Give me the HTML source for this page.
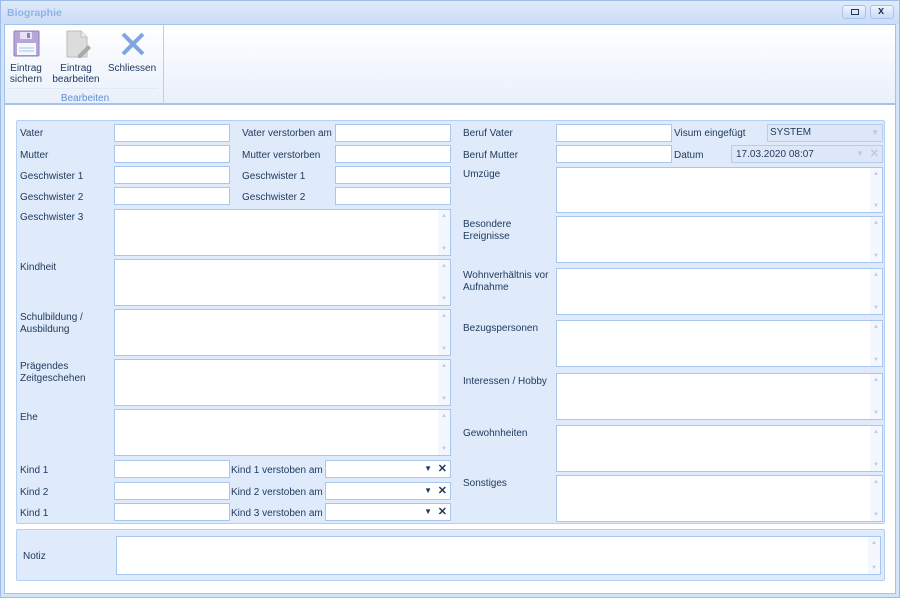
<!DOCTYPE html>
<html><head><meta charset="utf-8"><style>
*{box-sizing:border-box;margin:0;padding:0}
body{width:900px;height:598px;background:#fff;font-family:"Liberation Sans",sans-serif;font-size:10px;color:#1e395b;position:relative;overflow:hidden}
.a{position:absolute}
.win{left:0;top:0;width:900px;height:598px;border:1px solid #9dbde8;background:#d3e3f8}
.title{left:1px;top:1px;width:898px;height:23px;background:linear-gradient(#dfeafb,#cbdcf6);}
.title span{position:absolute;left:6px;top:6px;font-weight:bold;color:#8fb2e6;font-size:10.5px}
.btn{top:5px;width:24px;height:14px;border:1px solid #a8c4ec;border-radius:3px;background:linear-gradient(#eef4fd,#c9dbf5)}
.ribbon{left:4px;top:24px;width:892px;height:80px;border:1px solid #a5c2ea;background:linear-gradient(#ffffff,#e9f0fb)}
.grp{left:4px;top:24px;width:160px;height:80px;border-right:1px solid #b8cff0}
.rt{font-size:10px;color:#1e395b;text-align:center;line-height:11px}
.body{left:4px;top:104px;width:892px;height:490px;background:#fff;border:1px solid #a5c2ea}
.pan{background:#dfeafb;border:1px solid #b6cff4;border-radius:2px}
.l{position:absolute;font-size:10px;color:#1e395b;line-height:12px;margin-top:1px}
.i .l{margin-top:0}
.i{position:absolute;background:#fff;border:1px solid #a9c6f0;height:18px}
.m{position:absolute;background:#fff;border:1px solid #a9c6f0}
.m:after{content:"";position:absolute;right:0;top:0;width:12px;height:100%;background:#f4f8fe}
.m i{position:absolute;right:3px;font-style:normal;font-size:6px;color:#b9cbe6;z-index:1}
.dd{position:absolute;right:18px;top:3px;font-size:8px;color:#1e395b}
.dx{position:absolute;right:3px;top:1px;font-size:11px;font-weight:bold;color:#1e395b}
</style></head><body>
<div class="a win"></div>
<div class="a title"><span>Biographie</span></div>
<div class="a btn" style="left:842px"><div class="a" style="left:8px;top:3px;width:8px;height:6px;border:1.5px solid #1e395b"></div></div>
<div class="a btn" style="left:870px"><div class="a" style="left:7px;top:-1px;font-size:11px;font-weight:bold;color:#1e395b">x</div></div>
<div class="a ribbon"></div>
<div class="a grp"></div>
<div class="a" style="left:8px;top:88px;width:150px;height:1px;background:#e0e9f6"></div>
<svg class="a" style="left:12px;top:30px" width="30" height="28" viewBox="0 0 30 28"><rect x="2" y="1" width="25" height="25" rx="1" fill="#b7a6d6" stroke="#8f7fb8"/><rect x="8" y="2" width="12" height="7" fill="#e8e2f4"/><rect x="15" y="3" width="3" height="5" fill="#8f7fb8"/><rect x="5" y="13" width="19" height="12" fill="#f4f8ff"/><line x1="7" y1="18" x2="22" y2="18" stroke="#aac4ee"/><line x1="7" y1="21" x2="22" y2="21" stroke="#aac4ee"/></svg>
<svg class="a" style="left:64px;top:30px" width="28" height="28" viewBox="0 0 28 28"><path d="M3 1h14l6 6v20H3z" fill="#dcdcdc" stroke="#bdbdbd"/><path d="M17 1v6h6" fill="#eee" stroke="#bdbdbd"/><path d="M14 25l10-10 3 3-10 10h-3z" fill="#aaa"/></svg>
<svg class="a" style="left:120px;top:31px" width="26" height="26" viewBox="0 0 26 26"><path d="M3 3L23 23M23 3L3 23" stroke="#7fa6e0" stroke-width="4"/></svg>
<div class="a rt" style="left:6px;top:63px;width:40px">Eintrag<br>sichern</div>
<div class="a rt" style="left:50px;top:63px;width:52px">Eintrag<br>bearbeiten</div>
<div class="a rt" style="left:106px;top:63px;width:52px">Schliessen</div>
<div class="a rt" style="left:40px;top:93px;width:90px;color:#5e8fd6">Bearbeiten</div>
<div class="a body"></div>
<div class="a pan" style="left:16px;top:120px;width:869px;height:404px"></div>
<div class="a pan" style="left:16px;top:529px;width:869px;height:52px"></div>

<div class="l" style="left:20px;top:127px">Vater</div><div class="i" style="left:114px;top:124px;width:116px"></div>
<div class="l" style="left:20px;top:149px">Mutter</div><div class="i" style="left:114px;top:145px;width:116px"></div>
<div class="l" style="left:20px;top:170px">Geschwister 1</div><div class="i" style="left:114px;top:166px;width:116px"></div>
<div class="l" style="left:20px;top:191px">Geschwister 2</div><div class="i" style="left:114px;top:187px;width:116px"></div>
<div class="l" style="left:242px;top:127px">Vater verstorben am</div><div class="i" style="left:335px;top:124px;width:116px"></div>
<div class="l" style="left:242px;top:149px">Mutter verstorben</div><div class="i" style="left:335px;top:145px;width:116px"></div>
<div class="l" style="left:242px;top:170px">Geschwister 1</div><div class="i" style="left:335px;top:166px;width:116px"></div>
<div class="l" style="left:242px;top:191px">Geschwister 2</div><div class="i" style="left:335px;top:187px;width:116px"></div>

<div class="l" style="left:20px;top:211px">Geschwister 3</div><div class="m" style="left:114px;top:209px;width:337px;height:47px"><i style="top:3px">▲</i><i style="bottom:3px">▼</i></div>
<div class="l" style="left:20px;top:261px">Kindheit</div><div class="m" style="left:114px;top:259px;width:337px;height:47px"><i style="top:3px">▲</i><i style="bottom:3px">▼</i></div>
<div class="l" style="left:20px;top:311px">Schulbildung /<br>Ausbildung</div><div class="m" style="left:114px;top:309px;width:337px;height:47px"><i style="top:3px">▲</i><i style="bottom:3px">▼</i></div>
<div class="l" style="left:20px;top:360px">Prägendes<br>Zeitgeschehen</div><div class="m" style="left:114px;top:359px;width:337px;height:47px"><i style="top:3px">▲</i><i style="bottom:3px">▼</i></div>
<div class="l" style="left:20px;top:411px">Ehe</div><div class="m" style="left:114px;top:409px;width:337px;height:47px"><i style="top:3px">▲</i><i style="bottom:3px">▼</i></div>

<div class="l" style="left:20px;top:464px">Kind 1</div><div class="i" style="left:114px;top:460px;width:116px"></div>
<div class="l" style="left:20px;top:486px">Kind 2</div><div class="i" style="left:114px;top:482px;width:116px"></div>
<div class="l" style="left:20px;top:507px">Kind 1</div><div class="i" style="left:114px;top:503px;width:116px"></div>
<div class="l" style="left:231px;top:464px">Kind 1 verstoben am</div><div class="i" style="left:325px;top:460px;width:126px"><span class="dd">▼</span><span class="dx">✕</span></div>
<div class="l" style="left:231px;top:486px">Kind 2 verstoben am</div><div class="i" style="left:325px;top:482px;width:126px"><span class="dd">▼</span><span class="dx">✕</span></div>
<div class="l" style="left:231px;top:507px">Kind 3 verstoben am</div><div class="i" style="left:325px;top:503px;width:126px"><span class="dd">▼</span><span class="dx">✕</span></div>

<div class="l" style="left:463px;top:127px">Beruf Vater</div><div class="i" style="left:556px;top:124px;width:116px"></div>
<div class="l" style="left:463px;top:149px">Beruf Mutter</div><div class="i" style="left:556px;top:145px;width:116px"></div>
<div class="l" style="left:674px;top:127px">Visum eingefügt</div><div class="i" style="left:767px;top:124px;width:116px;background:#dde7f8;border-color:#b6cdf0"><span class="l" style="left:2px;top:2px">SYSTEM</span><span class="dd" style="right:3px;color:#b9cbe6">▼</span></div>
<div class="l" style="left:674px;top:149px">Datum</div><div class="i" style="left:731px;top:145px;width:152px;background:#dde7f8;border-color:#b6cdf0"><span class="l" style="left:4px;top:3px">17.03.2020 08:07</span><span class="dd" style="color:#b9cbe6">▼</span><span class="dx" style="color:#b9cbe6">✕</span></div>

<div class="l" style="left:463px;top:168px">Umzüge</div><div class="m" style="left:556px;top:167px;width:327px;height:46px"><i style="top:3px">▲</i><i style="bottom:3px">▼</i></div>
<div class="l" style="left:463px;top:218px">Besondere<br>Ereignisse</div><div class="m" style="left:556px;top:216px;width:327px;height:47px"><i style="top:3px">▲</i><i style="bottom:3px">▼</i></div>
<div class="l" style="left:463px;top:269px">Wohnverhältnis vor<br>Aufnahme</div><div class="m" style="left:556px;top:268px;width:327px;height:47px"><i style="top:3px">▲</i><i style="bottom:3px">▼</i></div>
<div class="l" style="left:463px;top:322px">Bezugspersonen</div><div class="m" style="left:556px;top:320px;width:327px;height:47px"><i style="top:3px">▲</i><i style="bottom:3px">▼</i></div>
<div class="l" style="left:463px;top:375px">Interessen / Hobby</div><div class="m" style="left:556px;top:373px;width:327px;height:47px"><i style="top:3px">▲</i><i style="bottom:3px">▼</i></div>
<div class="l" style="left:463px;top:427px">Gewohnheiten</div><div class="m" style="left:556px;top:425px;width:327px;height:47px"><i style="top:3px">▲</i><i style="bottom:3px">▼</i></div>
<div class="l" style="left:463px;top:477px">Sonstiges</div><div class="m" style="left:556px;top:475px;width:327px;height:47px"><i style="top:3px">▲</i><i style="bottom:3px">▼</i></div>

<div class="l" style="left:23px;top:550px">Notiz</div><div class="m" style="left:116px;top:536px;width:765px;height:39px"><i style="top:3px">▲</i><i style="bottom:3px">▼</i></div>
</body></html>
